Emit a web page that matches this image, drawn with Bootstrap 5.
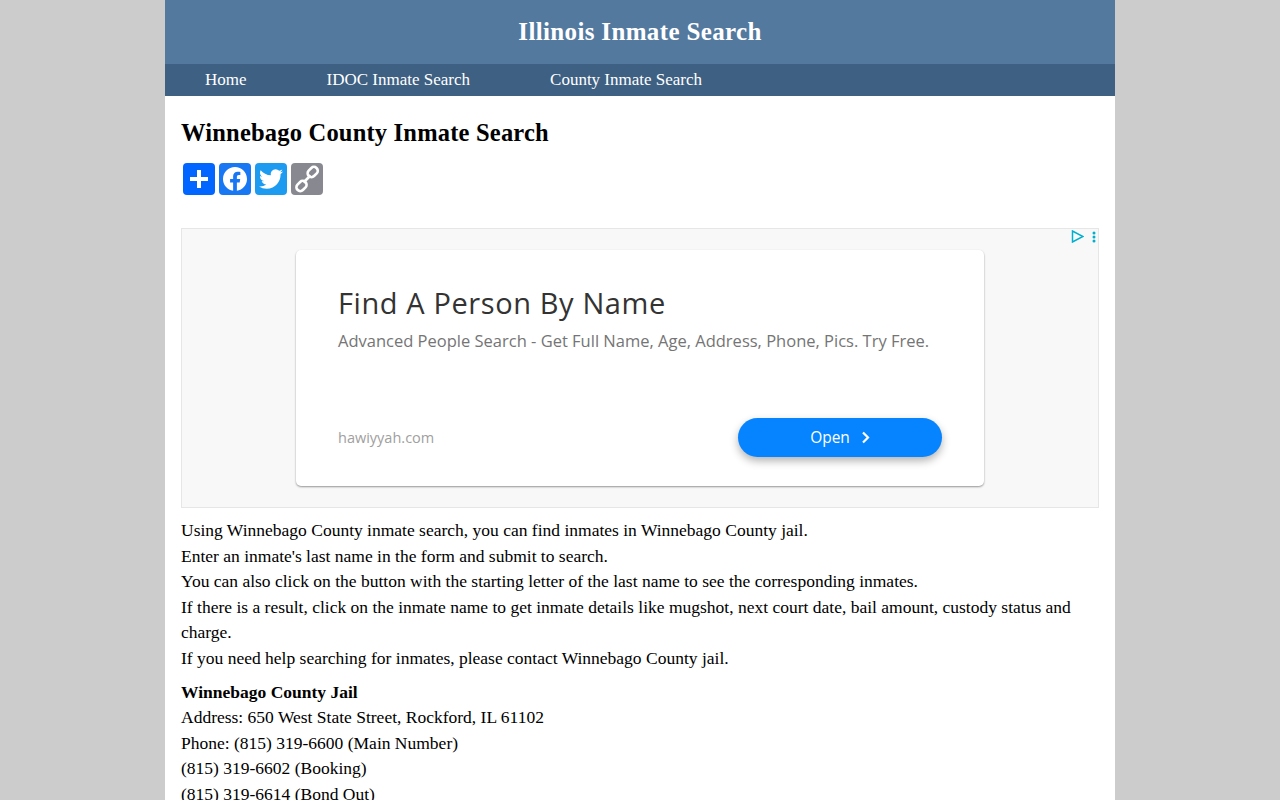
<!DOCTYPE html>
<html lang="en">
<head>
<meta charset="utf-8">
<title>Winnebago County Inmate Search</title>
<link href="https://cdn.jsdelivr.net/npm/bootstrap@5.3.0/dist/css/bootstrap.min.css" rel="stylesheet">
<style>
html,body{height:800px;overflow:hidden}
body{background:#ccc;font-family:"Liberation Serif",serif;font-size:17.5px;line-height:25.6px;color:#000}
.page-wrap{width:950px;background:#fff;min-height:900px}
.site-head{height:64px;background:#53799f;color:#fff;font-size:25px;font-weight:700;letter-spacing:.35px}
.site-nav{height:32px;background:#3e6082;gap:80px;padding-left:40px}
.site-nav a{color:#fff;text-decoration:none;font-size:17px;line-height:31px}
.content{padding:0 16px}
.page-title{font-family:"Liberation Serif",serif;font-size:24.5px;font-weight:700;line-height:30px;margin:22px 0 0;letter-spacing:.2px}
.share{gap:4px;margin:15px 0 0 2px}
.share-btn{width:32px;height:32px;border-radius:4px}
.ad-box{height:280px;margin-top:33px;background:#f8f8f8;border:1px solid #e6e6e6;position:relative}
.ad-card{width:688px;height:236px;margin:21px auto 0;background:#fff;border-radius:5px;box-shadow:0 1px 2px rgba(0,0,0,.4);font-family:"Open Sans",sans-serif;padding:33px 42px 0;transform:translateX(0)}
.ad-title{font-size:29px;line-height:40px;color:#333;letter-spacing:.6px}
.ad-sub{font-size:16.5px;line-height:24px;color:#757575;margin-top:6px;white-space:nowrap}
.ad-foot{margin-top:65px}
.ad-domain{font-size:14.5px;color:#a0a0a0}
.ad-open{width:204px;height:39px;border-radius:20px;background:#0684ff;color:#fff;font-size:15.5px;box-shadow:0 4px 8px rgba(0,0,0,.3);gap:11px}
.ad-mark{position:absolute;top:1px;right:2px;gap:8px}
.intro{margin:10px 0 0}
.jail{margin:8px 0 0}
.jail b{font-size:17.5px}
.txt-line{display:block;white-space:nowrap}
</style>
</head>
<body>
<div class="page-wrap mx-auto">
  <div class="site-head d-flex align-items-center justify-content-center">Illinois Inmate Search</div>
  <nav class="site-nav d-flex">
    <a href="#">Home</a>
    <a href="#">IDOC Inmate Search</a>
    <a href="#">County Inmate Search</a>
  </nav>
  <main class="content">
    <h1 class="page-title">Winnebago County Inmate Search</h1>
    <div class="share d-flex">
      <a class="share-btn d-block" href="#" style="background:#0166ff" aria-label="Share"><svg width="32" height="32" viewBox="0 0 32 32"><path fill="#fff" d="M14 7h4v7h7v4h-7v7h-4v-7H7v-4h7z"/></svg></a>
      <a class="share-btn d-block" href="#" style="background:#1877f2" aria-label="Facebook"><svg width="32" height="32" viewBox="0 0 32 32"><path fill="#fff" d="M28 16c0-6.627-5.373-12-12-12S4 9.373 4 16c0 5.99 4.388 10.954 10.125 11.854V19.47H11.078V16h3.047v-2.644c0-3.007 1.792-4.668 4.533-4.668 1.312 0 2.686.234 2.686.234v2.953H19.83c-1.491 0-1.956.925-1.956 1.875V16h3.328l-.532 3.469h-2.796v8.385C23.612 26.954 28 21.99 28 16z"/></svg></a>
      <a class="share-btn d-block" href="#" style="background:#1d9bf0" aria-label="Twitter"><svg width="32" height="32" viewBox="0 0 32 32"><path fill="#fff" d="M28 8.557a9.913 9.913 0 0 1-2.828.775 4.93 4.93 0 0 0 2.166-2.725 9.738 9.738 0 0 1-3.13 1.194 4.92 4.92 0 0 0-3.593-1.55 4.924 4.924 0 0 0-4.794 6.049c-4.09-.21-7.72-2.17-10.15-5.15a4.942 4.942 0 0 0-.665 2.477c0 1.71.87 3.214 2.19 4.1a4.968 4.968 0 0 1-2.23-.616v.06c0 2.39 1.7 4.38 3.952 4.83-.414.115-.85.174-1.297.174-.318 0-.626-.03-.928-.086a4.935 4.935 0 0 0 4.6 3.42 9.893 9.893 0 0 1-6.114 2.107c-.398 0-.79-.023-1.175-.068a13.953 13.953 0 0 0 7.55 2.213c9.056 0 14.01-7.507 14.01-14.013 0-.213-.005-.426-.015-.637.96-.695 1.795-1.56 2.455-2.55z"/></svg></a>
      <a class="share-btn d-block" href="#" style="background:#888990" aria-label="Copy Link"><svg width="32" height="32" viewBox="0 0 32 32"><g fill="none" stroke="#fff" stroke-width="2.6"><rect x="16.2" y="5.2" width="11" height="7.6" rx="3.6" transform="rotate(-45 21.7 9)" /><rect x="5" y="19.2" width="11" height="7.6" rx="3.6" transform="rotate(-45 10.5 23)" /><path d="M12.5 19.5l7-7"/></g></svg></a>
    </div>
    <div class="ad-box">
      <div class="ad-mark d-flex align-items-center">
        <svg width="13" height="13" viewBox="0 0 13 13"><path d="M1.5 1v11L12 6.5z" fill="none" stroke="#00aecd" stroke-width="1.5"/></svg>
        <svg width="4" height="12" viewBox="0 0 4 12"><g fill="#00aecd"><circle cx="2" cy="2" r="1.5"/><circle cx="2" cy="6" r="1.5"/><circle cx="2" cy="10" r="1.5"/></g></svg>
      </div>
      <div class="ad-card">
        <div class="ad-title">Find A Person By Name</div>
        <div class="ad-sub">Advanced People Search - Get Full Name, Age, Address, Phone, Pics. Try Free.</div>
        <div class="ad-foot d-flex justify-content-between align-items-center">
          <span class="ad-domain">hawiyyah.com</span>
          <span class="ad-open d-flex align-items-center justify-content-center">Open
            <svg width="9" height="13" viewBox="0 0 9 13"><path d="M2 1.5l5 5-5 5" fill="none" stroke="#fff" stroke-width="2.2"/></svg>
          </span>
        </div>
      </div>
    </div>
    <p class="intro">
      Using Winnebago County inmate search, you can find inmates in Winnebago County jail.<br>
      Enter an inmate's last name in the form and submit to search.<br>
      You can also click on the button with the starting letter of the last name to see the corresponding inmates.<br>
      If there is a result, click on the inmate name to get inmate details like mugshot, next court date, bail amount, custody status and charge.<br>
      If you need help searching for inmates, please contact Winnebago County jail.
    </p>
    <p class="jail">
      <b>Winnebago County Jail</b><br>
      Address: 650 West State Street, Rockford, IL 61102<br>
      Phone: (815) 319-6600 (Main Number)<br>
      (815) 319-6602 (Booking)<br>
      (815) 319-6614 (Bond Out)
    </p>
  </main>
</div>
<script src="https://cdn.jsdelivr.net/npm/bootstrap@5.3.0/dist/js/bootstrap.bundle.min.js"></script>
</body>
</html>
